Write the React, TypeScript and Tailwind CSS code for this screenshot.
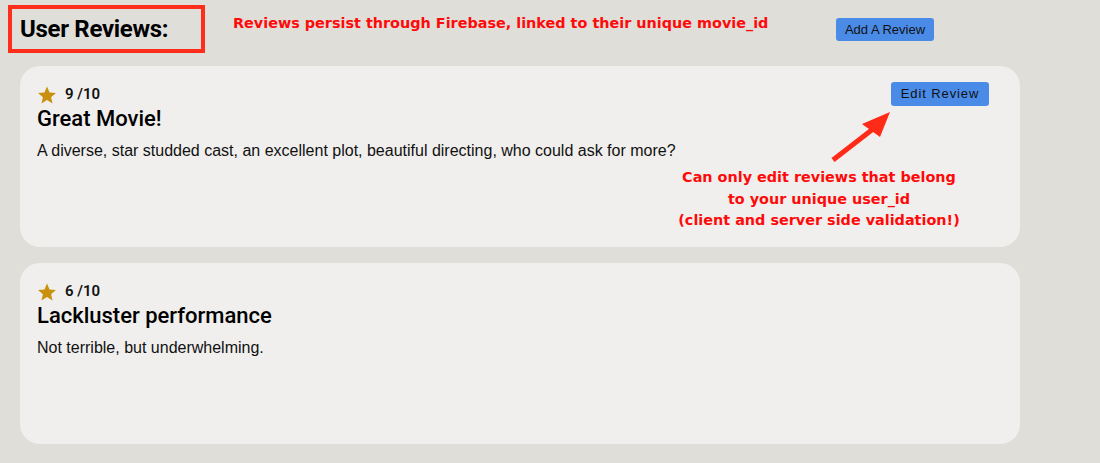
import React from "react";

type Review = {
  rating: number;
  title: string;
  body: string;
  mine?: boolean;
};

const reviews: Review[] = [
  {
    rating: 9,
    title: "Great Movie!",
    body: "A diverse, star studded cast, an excellent plot, beautiful directing, who could ask for more?",
    mine: true,
  },
  {
    rating: 6,
    title: "Lackluster performance",
    body: "Not terrible, but underwhelming.",
  },
];

function StarIcon() {
  return (
    <svg width="20" height="20" viewBox="0 0 24 24" aria-hidden>
      <path
        d="M12 1.8l3.05 7.05 7.65.7-5.8 5.05 1.75 7.5L12 18.1l-6.65 4 1.75-7.5L1.3 9.55l7.65-.7z"
        fill="#c9900e"
      />
    </svg>
  );
}

function ReviewCard({ review }: { review: Review }) {
  return (
    <div className="relative h-[181px] w-[1000px] rounded-[20px] bg-[#f0efed] pl-[17px] pt-[18px]">
      <div className="flex h-[21px] items-center gap-[8px]">
        <StarIcon />
        <span className="font-['Roboto',sans-serif] text-[15px] font-semibold text-[#111]">
          {review.rating} /10
        </span>
      </div>
      <h3 className="font-['Roboto',sans-serif] text-[22px] font-medium leading-[28px] text-black">
        {review.title}
      </h3>
      <p className="mt-[8px] font-['Liberation_Sans',Arial,sans-serif] text-[16px] leading-[20px] text-[#111]">
        {review.body}
      </p>

      {review.mine && (
        <>
          <button className="absolute right-[31px] top-[16px] h-[24px] w-[98px] rounded-[3px] bg-[#4a8be8] font-['Liberation_Sans',Arial,sans-serif] text-[13px] tracking-[0.9px] text-[#111]">
            Edit Review
          </button>

          {/* annotation arrow */}
          <svg
            className="absolute left-[800px] top-[34px]"
            width="80"
            height="70"
            viewBox="0 0 80 70"
            aria-hidden
          >
            <line x1="13" y1="60" x2="53" y2="29" stroke="#ff2a17" strokeWidth="5" />
            <polygon points="70,12 42,24 60,37" fill="#ff2a17" />
          </svg>

          <p className="absolute left-[619px] top-[101px] w-[360px] text-center font-['DejaVu_Sans',sans-serif] text-[14.4px] font-bold leading-[21.5px] text-[#ff0a0a]">
            Can only edit reviews that belong
            <br />
            to your unique user_id
            <br />
            (client and server side validation!)
          </p>
        </>
      )}
    </div>
  );
}

export default function App() {
  return (
    <div className="min-h-screen bg-[#dfded9]">
      {/* Header */}
      <div className="flex h-[66px] items-start pl-[8px] pt-[5px]">
        <div className="h-[48px] w-[197px] border-[4px] border-[#ff2d1b] pl-[8px] pt-[6px]">
          <h2 className="font-['Roboto',sans-serif] text-[24px] font-bold leading-[28px] tracking-[-0.3px] text-black">
            User Reviews:
          </h2>
        </div>
        <p className="ml-[28px] mt-[8px] w-[603px] font-['DejaVu_Sans',sans-serif] text-[14.4px] font-bold text-[#ff0a0a]">
          Reviews persist through Firebase, linked to their unique movie_id
        </p>
        <button className="mt-[13px] h-[23px] w-[98px] rounded-[3px] bg-[#4a8be8] font-['Liberation_Sans',Arial,sans-serif] text-[13px] text-[#111]">
          Add A Review
        </button>
      </div>

      {/* Reviews */}
      <div className="flex flex-col gap-[16px] pl-[20px] pb-[19px]">
        {reviews.map((r) => (
          <ReviewCard key={r.title} review={r} />
        ))}
      </div>
    </div>
  );
}
